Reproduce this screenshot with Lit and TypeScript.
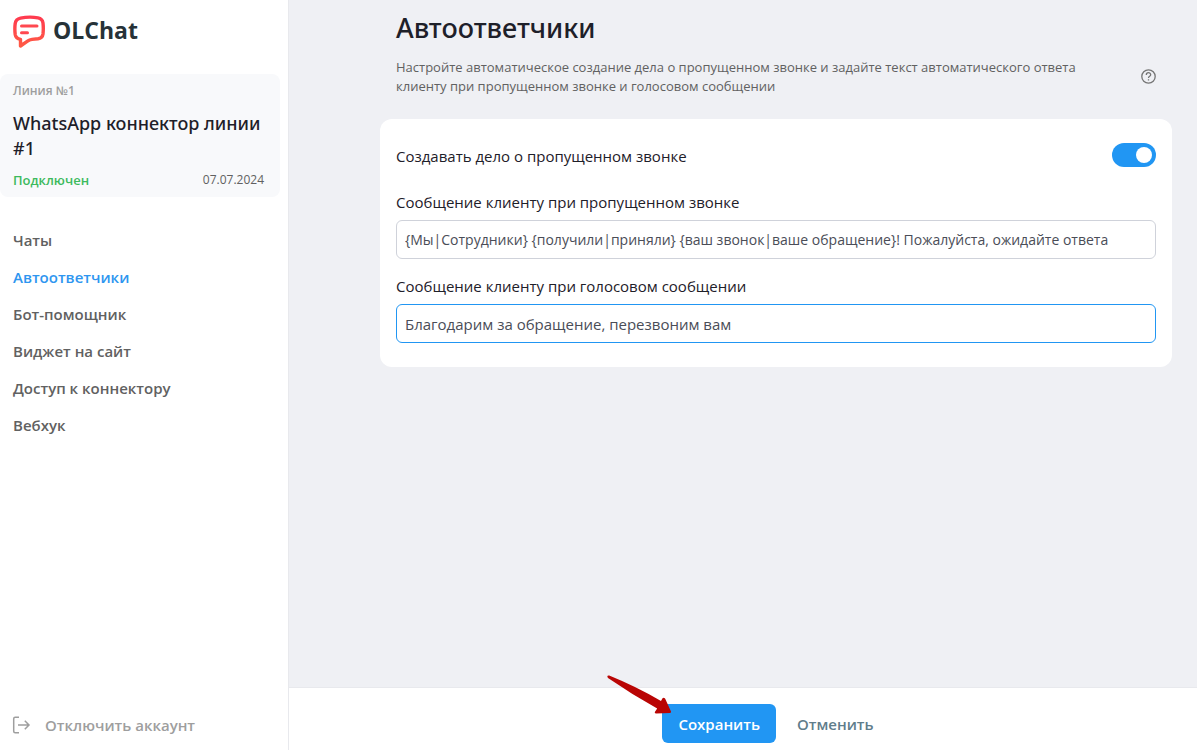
import { LitElement, html, css } from "lit";
import { customElement, state } from "lit/decorators.js";

const MENU = ["Чаты", "Автоответчики", "Бот-помощник", "Виджет на сайт", "Доступ к коннектору", "Вебхук"];

@customElement("app-root")
export class AppRoot extends LitElement {
  @state() private active = 1;

  static styles = css`
    :host {
      display: grid;
      grid-template-columns: 289px minmax(0, 1fr);
      min-height: 100vh;
      background: #eff0f4;
      color: #1e2029;
      font-family: "Open Sans", "Noto Sans", sans-serif;
      font-size: 15px;
      line-height: 20px;
    }
    * { box-sizing: border-box; }
    button, input { font: inherit; }
    button { border: 0; background: none; cursor: pointer; }

    .side {
      display: flex;
      flex-direction: column;
      background: #fff;
      border-right: 1px solid #e8e9ed;
    }
    .brand {
      display: flex;
      align-items: center;
      gap: 7px;
      padding: 14px 13px 0;
      font-size: 23px;
      line-height: 32px;
      font-weight: 700;
      color: #263238;
    }
    .brand svg { display: block; }
    .brand span { padding-bottom: 2px; }
    .line {
      margin: 26px 8px 0 0;
      padding: 8px 16px 7px 13px;
      border-radius: 8px;
      background: #f8f9fb;
    }
    .line-no { font-size: 12px; line-height: 18px; font-weight: 600; color: #9e9e9e; }
    .line-name { margin: 11px 0 9px; font-family: "Noto Sans", "Open Sans", sans-serif; font-size: 18px; line-height: 25px; font-weight: 500; }
    .line-foot { display: flex; justify-content: space-between; align-items: center; }
    .status { font-size: 13px; font-weight: 600; color: #3dba5d; }
    .date { font-size: 12px; color: #616161; }
    .menu { display: flex; flex-direction: column; gap: 17px; padding: 33px 13px; }
    .menu a { color: #616161; font-weight: 600; text-decoration: none; }
    .menu a.on { color: #2e96f0; }
    .logout {
      display: flex;
      align-items: center;
      gap: 13px;
      margin-top: auto;
      padding: 0 12px 15px;
      color: #9e9e9e;
      font-weight: 600;
    }

    .main { display: flex; flex-direction: column; }
    .content { flex: 1; padding: 11px 25px 24px 91px; }
    .head { padding: 0 16px; }
    h1 { margin: 0; font-family: "Noto Sans", "Open Sans", sans-serif; font-size: 27px; line-height: 34px; font-weight: 500; }
    .intro { display: flex; align-items: center; justify-content: space-between; gap: 32px; margin-top: 13px; }
    .intro p { margin: 0; max-width: 704px; font-size: 13px; line-height: 19px; color: #616161; }
    .help { display: block; padding: 0 0 2px; color: #757575; }
    .help svg { display: block; }
    .card { margin-top: 23px; padding: 23px 16px 24px; border-radius: 12px; background: #fff; }
    .row { display: flex; align-items: center; justify-content: space-between; }
    .row label { line-height: 24px; padding-top: 2px; }
    .switch {
      appearance: none;
      display: flex;
      align-items: center;
      width: 44px;
      height: 24px;
      margin: 0;
      padding: 4px;
      border-radius: 12px;
      background: #bdbdbd;
      cursor: pointer;
    }
    .switch::before { content: ""; width: 16px; height: 16px; border-radius: 50%; background: #fff; }
    .switch:checked { justify-content: flex-end; background: #2196f3; }
    .field { display: flex; flex-direction: column; gap: 8px; margin-top: 24px; }
    .field + .field { margin-top: 17px; }
    .field input {
      width: 100%;
      height: 39px;
      padding: 0 8px;
      border: 1px solid #cfd2da;
      border-radius: 6px;
      outline: 0;
      background: #fff;
      color: #4a4d57;
    }
    .field input.template { font-size: 14px; }
    .field input.current, .field input:focus { border-color: #2196f3; }

    .foot {
      display: flex;
      justify-content: center;
      gap: 5px;
      padding: 16px 25px 7px 91px;
      border-top: 1px solid #e8e9ed;
      background: #fff;
    }
    .foot button { height: 39px; padding: 1px 16px 0; border-radius: 6px; font-weight: 600; color: #607d8b; }
    .save { position: relative; }
    .foot button.primary { background: #2196f3; color: #fff; }
    .arrow { position: absolute; right: 104px; bottom: 29px; pointer-events: none; }
  `;

  render() {
    return html`
      <aside class="side">
        <div class="brand">
          <svg width="33" height="34" viewBox="0 0 33 34" fill="none" stroke-width="3" stroke-linecap="round" stroke-linejoin="round">
            <defs>
              <linearGradient id="g" x1="0" y1="0" x2="0" y2="1">
                <stop offset="0" stop-color="#ff3b4f" />
                <stop offset="1" stop-color="#ff5a45" />
              </linearGradient>
            </defs>
            <path stroke="url(#g)" stroke-width="3.400" d="M7.500 4.200Q16 2.200 25 3.800Q29.400 4.600 30 9Q30.600 14.500 30 20Q29.400 24.200 25 24.800L19 25.400Q16.500 25.600 14.500 27.200L7.500 32V25.400Q2.800 24.600 2.200 20.500Q1.500 14.500 2.200 9.500Q2.800 5.200 7.500 4.200Z" />
            <path stroke="#ff4850" stroke-width="3" d="M8.500 12H24M8.500 18.700H14.500" />
          </svg>
          <span>OLChat</span>
        </div>
        <section class="line">
          <div class="line-no">Линия №1</div>
          <div class="line-name">WhatsApp коннектор линии #1</div>
          <div class="line-foot"><span class="status">Подключен</span><span class="date">07.07.2024</span></div>
        </section>
        <nav class="menu">
          ${MENU.map((name, i) => html`<a href="#" class=${i === this.active ? "on" : ""}
            @click=${(e: Event) => { e.preventDefault(); this.active = i; }}>${name}</a>`)}
        </nav>
        <button class="logout" type="button">
          <svg width="20" height="20" viewBox="0 0 20 20" fill="none" stroke="currentColor" stroke-width="1.500">
            <path d="M7 2.300H3.200Q1.700 2.300 1.700 3.800V16.200Q1.700 17.700 3.200 17.700H7M6 10H16.500M12.800 5.800L17 10L12.800 14.200" />
          </svg>
          Отключить аккаунт
        </button>
      </aside>

      <main class="main">
        <div class="content">
          <header class="head">
            <h1>Автоответчики</h1>
            <div class="intro">
              <p>Настройте автоматическое создание дела о пропущенном звонке и задайте текст автоматического ответа клиенту при пропущенном звонке и голосовом сообщении</p>
              <button class="help" type="button" aria-label="Справка">
                <svg width="15" height="15" viewBox="0 0 15 15" fill="none" stroke="currentColor" stroke-width="1.300">
                  <circle cx="7.500" cy="7.500" r="6.700" />
                  <path d="M5.300 5.900C5.300 3 9.700 3 9.700 5.800C9.700 7.300 7.500 7.300 7.500 9M7.500 10.200V11.600" />
                </svg>
              </button>
            </div>
          </header>
          <section class="card">
            <div class="row">
              <label for="deal">Создавать дело о пропущенном звонке</label>
              <input id="deal" class="switch" type="checkbox" role="switch" checked />
            </div>
            <div class="field">
              <label for="missed">Сообщение клиенту при пропущенном звонке</label>
              <input id="missed" class="template" type="text" value="{Мы|Сотрудники} {получили|приняли} {ваш звонок|ваше обращение}! Пожалуйста, ожидайте ответа" />
            </div>
            <div class="field">
              <label for="voice">Сообщение клиенту при голосовом сообщении</label>
              <input id="voice" class="current" type="text" value="Благодарим за обращение, перезвоним вам" />
            </div>
          </section>
        </div>
        <footer class="foot">
          <div class="save">
            <button class="primary" type="button">Сохранить</button>
            <svg class="arrow" width="66" height="40" viewBox="0 0 66 40" fill="#b90504">
              <path d="M3.200 1.600Q30 12.500 55 27L56.500 24.200Q58 23 59.200 24.800L65 37.500Q65.300 38.800 64 39L50 39.600Q48 39.400 49 37.800L51.200 34.600Q26 20.500 2 4Q.3 1.200 3.200 1.600Z" />
            </svg>
          </div>
          <button type="button">Отменить</button>
        </footer>
      </main>
    `;
  }
}
